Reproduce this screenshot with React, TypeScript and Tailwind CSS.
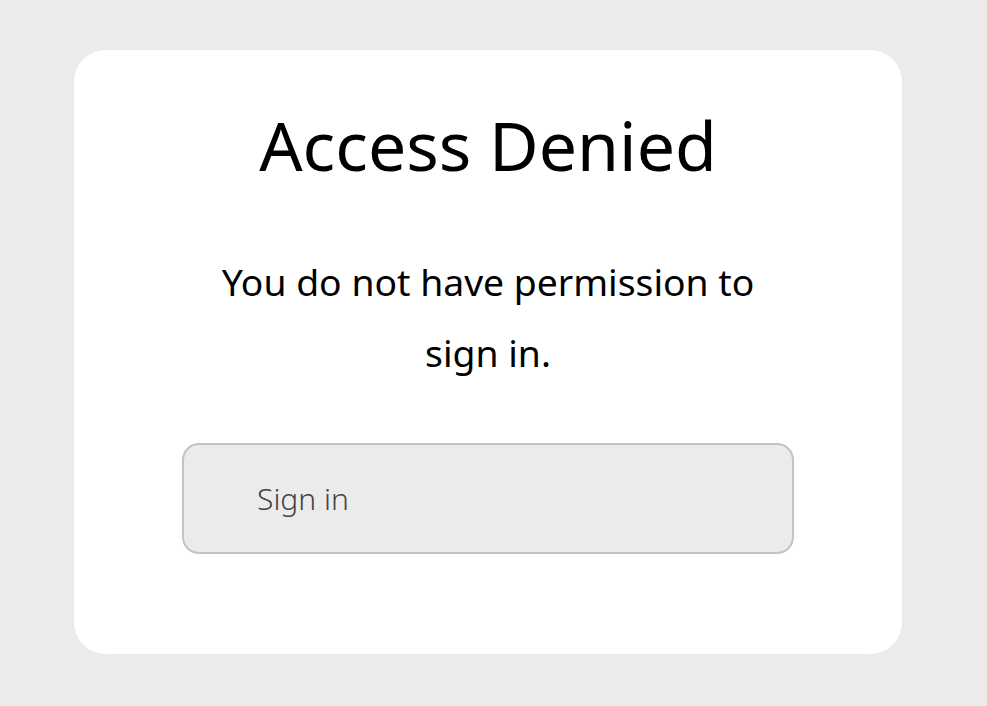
export default function App() {
  return (
    <div
      className="min-h-[706px] w-full bg-[#ebebeb] pt-[50px] pl-[74px]"
      style={{ fontFamily: '"Noto Sans", "Open Sans", sans-serif' }}
    >
      <div className="flex h-[604px] w-[828px] flex-col items-center rounded-[32px] bg-white pt-[61px]">
        <h1 className="text-[68px] leading-none font-normal text-black">Access Denied</h1>
        <p className="mt-[67px] w-[570px] text-center text-[37.3px] leading-[71px] text-black">
          You do not have permission to sign in.
        </p>
        <button className="mt-[55px] flex h-[111px] w-[612px] items-center rounded-[17px] border-2 border-[#c3c3c3] bg-[#ebebeb] pl-[73px] text-left text-[30px] font-light text-[#444]">
          Sign in
        </button>
      </div>
    </div>
  );
}
